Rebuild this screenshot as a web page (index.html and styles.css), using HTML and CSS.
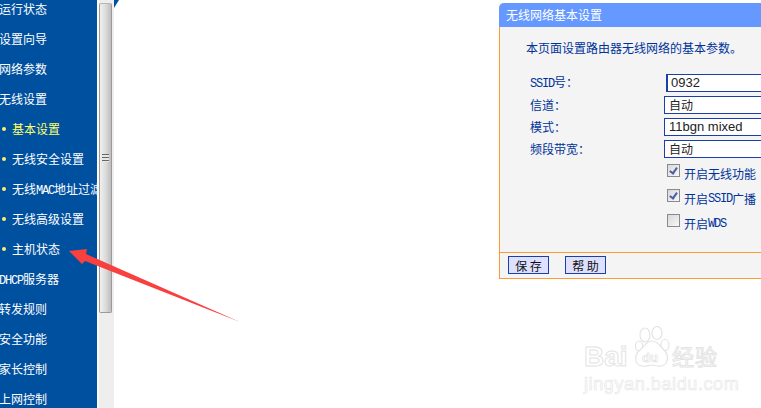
FILE: index.html
```html
<!DOCTYPE html>
<html lang="zh-CN">
<head>
  <meta charset="UTF-8" />
  <title>无线网络基本设置</title>
  <link rel="stylesheet" href="styles.css">
</head>
<body>
  <div class="page">
    <div class="menu">
      <div class="menu-item">运行状态</div>
      <div class="menu-item">设置向导</div>
      <div class="menu-item">网络参数</div>
      <div class="menu-item">无线设置</div>
      <div class="menu-item sub active">基本设置</div>
      <div class="menu-item sub">无线安全设置</div>
      <div class="menu-item sub">无线<span class="en">MAC</span>地址过滤</div>
      <div class="menu-item sub">无线高级设置</div>
      <div class="menu-item sub">主机状态</div>
      <div class="menu-item"><span class="en">DHCP</span>服务器</div>
      <div class="menu-item">转发规则</div>
      <div class="menu-item">安全功能</div>
      <div class="menu-item">家长控制</div>
      <div class="menu-item">上网控制</div>
    </div>

    <div class="scrollbar">
      <div class="thumb"><div class="grip"></div></div>
    </div>

    <div class="content">
      <div class="corner"></div>
      <div class="panel">
        <div class="panel-title">无线网络基本设置</div>
        <div class="panel-body">
          <p class="intro">本页面设置路由器无线网络的基本参数。</p>
          <div class="form-row first">
            <label><span class="en">SSID</span>号：</label>
            <div class="field text-field">0932</div>
          </div>
          <div class="form-row">
            <label>信道：</label>
            <div class="field cjk">自动</div>
          </div>
          <div class="form-row">
            <label>模式：</label>
            <div class="field">11bgn mixed</div>
          </div>
          <div class="form-row">
            <label>频段带宽：</label>
            <div class="field cjk">自动</div>
          </div>
          <div class="check-row"><span class="check on"></span>开启无线功能</div>
          <div class="check-row"><span class="check on"></span>开启<span class="en">SSID</span>广播</div>
          <div class="check-row"><span class="check"></span>开启<span class="en">WDS</span></div>
        </div>
        <div class="panel-foot">
          <div class="btn">保 存</div>
          <div class="btn">帮 助</div>
        </div>
      </div>
    </div>
  </div>

  <svg class="arrow" width="761" height="408" viewBox="0 0 761 408">
    <polygon fill="#f8403f" points="69,251 87,249 86,254 240,322 85,261 82,264"/>
  </svg>

  <div class="watermark">
    <span class="wm-word">Bai</span>
    <svg class="wm-paw" width="38" height="44" viewBox="0 0 38 44" fill="#fff" stroke="#e4e4e4" stroke-width="1.2">
      <ellipse cx="11" cy="9" rx="5" ry="7"/>
      <ellipse cx="23" cy="7" rx="5" ry="6.5"/>
      <ellipse cx="5" cy="20" rx="3.5" ry="5"/>
      <ellipse cx="31" cy="19" rx="4" ry="5.5"/>
      <path d="M18 15c6 0 8 5 12 9 5 5 5 15-3 16-4 .5-6-1-9-1s-6 2-10 1C0 39 0 29 6 24c4-3 6-9 12-9z"/>
      <text x="8" y="36" class="wm-du">du</text>
    </svg>
    <span class="wm-cjk">经验</span>
    <div class="wm-url">jingyan.baidu.com</div>
  </div>
</body>
</html>
```

FILE: styles.css
```css
html, body {
  margin: 0;
  height: 100%;
  overflow: hidden;
  background: #fff;
}
body {
  font-family: "Noto Sans CJK SC", sans-serif;
  font-size: 12px;
}
.page {
  display: flex;
  height: 408px;
}
.en {
  font-family: "Liberation Mono", monospace;
  font-size: 12px;
  letter-spacing: -1.2px;
}

/* left menu */
.menu {
  width: 97px;
  flex: none;
  background: #0050a0;
  overflow: hidden;
  margin-right: 1px;
}
.menu-item {
  position: relative;
  height: 30px;
  line-height: 18px;
  color: #fff;
  white-space: nowrap;
  margin-left: -1px;
}
.menu-item.sub {
  padding-left: 13px;
}
.menu-item.sub::before {
  content: "";
  position: absolute;
  left: 3px;
  top: 7px;
  width: 4px;
  height: 4px;
  border-radius: 50%;
  background: #ffef70;
}
.menu-item.active {
  color: #ffff66;
}

/* scrollbar */
.scrollbar {
  width: 15px;
  flex: none;
  background: #eeeeee;
  border-left: 1px solid #f8f8f8;
}
.thumb {
  width: 13px;
  height: 310px;
  margin-top: 3px;
  border: 1px solid #9a9a9a;
  border-top-color: #b5b5b5;
  border-radius: 2px;
  background: linear-gradient(to right, #f0f0f0, #dcdcdc 50%, #bdbdbd);
  display: flex;
  align-items: center;
  justify-content: center;
  box-sizing: border-box;
}
.grip {
  width: 7px;
  height: 8px;
  background: repeating-linear-gradient(to bottom, #666 0 1px, #e6e6e6 1px 3px);
}

/* main */
.content {
  flex: 1;
  position: relative;
  min-width: 0;
  overflow: hidden;
  padding: 3px 0 0 385px;
}
.corner {
  position: absolute;
  left: 0;
  top: 0;
  width: 0;
  height: 0;
  border-top: 8px solid #0050a0;
  border-right: 5px solid transparent;
}
.panel {
  width: 300px;
  height: 276px;
  display: flex;
  flex-direction: column;
  box-sizing: border-box;
  border-bottom: 1px solid #ff9933;
  background: #f4f4f4;
}
.panel-title {
  height: 24px;
  line-height: 24px;
  background: #6699ff;
  color: #fff;
  padding-left: 7px;
  border-top-left-radius: 5px;
  flex: none;
}
.panel-body {
  flex: 1;
  border-left: 1px solid #ff9933;
  color: #003399;
  padding-left: 166px;
  position: relative;
}
.intro {
  margin: 12px 0 0 -140px;
  line-height: 18px;
  height: 18px;
}
.form-row {
  display: flex;
  height: 22px;
  align-items: center;
}
.form-row.first {
  margin-top: 15px;
}
.form-row label {
  position: absolute;
  left: 30px;
  margin-top: -2px;
}
.field {
  flex: none;
  width: 120px;
  height: 18px;
  margin-left: -2px;
  border: 1px solid #1a3fa8;
  background: #fff;
  box-sizing: border-box;
  color: #222;
  padding-left: 4px;
  line-height: 16px;
  font-family: "Liberation Sans", sans-serif;
  font-size: 13px;
}
.field.cjk {
  font-family: "Noto Sans CJK SC", sans-serif;
  font-size: 12px;
}
.text-field {
  margin-left: 0;
  border-left-width: 2px;
  padding-left: 3px;
}
.check-row {
  display: flex;
  align-items: center;
  height: 25px;
  margin-left: 1px;
  white-space: nowrap;
}
.form-row + .check-row {
  margin-top: 1px;
}
.check {
  width: 13px;
  height: 13px;
  margin-right: 4px;
  box-sizing: border-box;
  border: 1px solid #8a8a8a;
  background: linear-gradient(135deg, #d8d8d8, #f8f8f8);
  position: relative;
  top: -3px;
}
.check.on::after {
  content: "";
  position: absolute;
  left: 3px;
  top: 1px;
  width: 3px;
  height: 6px;
  border: solid #4a5fa8;
  border-width: 0 2px 2px 0;
  transform: rotate(35deg);
}
.panel-foot {
  flex: none;
  height: 26px;
  box-sizing: border-box;
  border-top: 1px solid #ff9933;
  border-left: 1px solid #ff9933;
  padding: 3px 0 0 8px;
  display: flex;
  gap: 16px;
}
.btn {
  width: 41px;
  height: 18px;
  box-sizing: border-box;
  border: 1px solid #1a3fa8;
  background: #dde0ff;
  color: #111;
  text-align: center;
  line-height: 18px;
}

/* things lying over the page */
.arrow {
  position: absolute;
  left: 0;
  top: 0;
  pointer-events: none;
}
.watermark {
  position: absolute;
  left: 584px;
  top: 324px;
  width: 140px;
  height: 72px;
  color: #fff;
}
.wm-word {
  position: absolute;
  left: 0;
  top: 17px;
  font: bold 28px/32px "Liberation Sans", sans-serif;
  -webkit-text-stroke: 1px #e4e4e4;
}
.wm-paw {
  position: absolute;
  left: 50px;
  top: 2px;
}
.wm-du {
  font: bold 13px "Liberation Sans", sans-serif;
  fill: #fff;
  stroke: #dcdcdc;
  stroke-width: 0.6;
}
.wm-cjk {
  position: absolute;
  left: 88px;
  top: 18px;
  font-size: 22px;
  line-height: 26px;
  letter-spacing: 1px;
  -webkit-text-stroke: 1px #e4e4e4;
}
.wm-url {
  position: absolute;
  left: 0;
  top: 50px;
  font: 18px/20px "Liberation Sans", sans-serif;
  letter-spacing: 0.6px;
  color: #fff;
  -webkit-text-stroke: 0.7px #e8e8e8;
  white-space: nowrap;
}
```
